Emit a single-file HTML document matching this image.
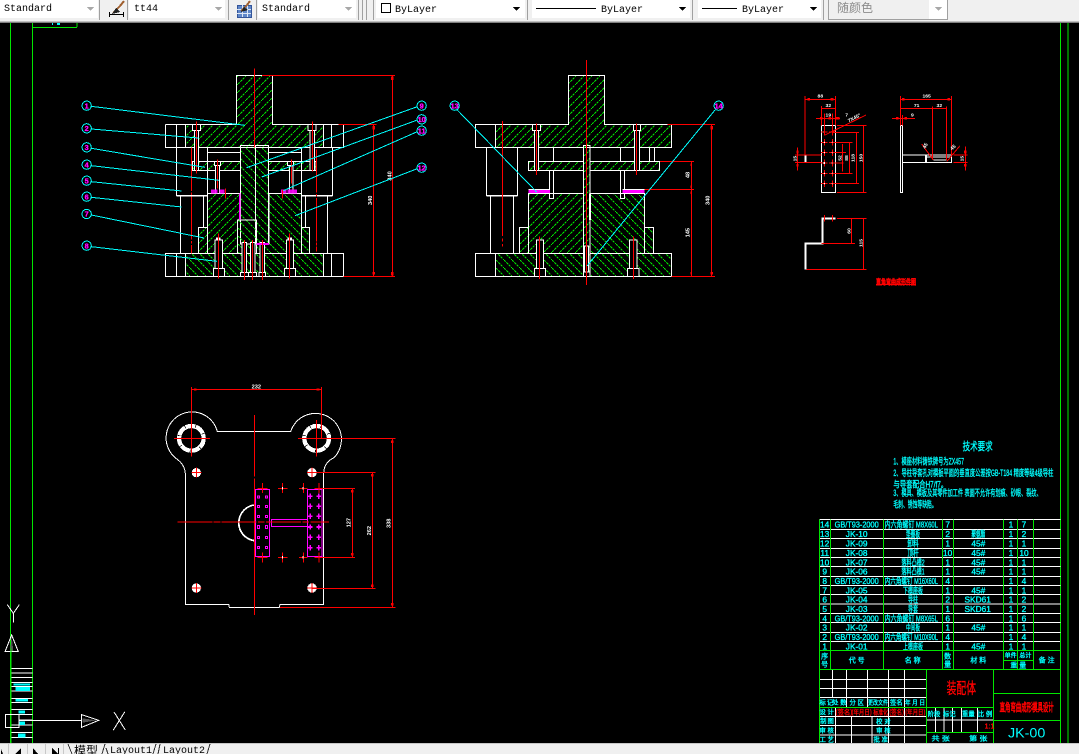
<!DOCTYPE html>
<html><head><meta charset="utf-8"><style>
html,body{margin:0;padding:0;background:#000;width:1079px;height:754px;overflow:hidden}
svg{display:block;position:absolute;left:0;top:0}
svg path,svg rect,svg circle{shape-rendering:crispEdges}
.w{stroke:#fff;stroke-width:3;fill:none}
.g{stroke:#00e600;stroke-width:3;fill:none}
.r{stroke:#f00;stroke-width:3;fill:none}
.c{stroke:#00ffff;stroke-width:3;fill:none}
.m{stroke:#f0f;stroke-width:3;fill:none}
text{font-family:"Liberation Sans","Noto Sans CJK SC",sans-serif}
.t{fill:#0ff;stroke:#0ff;stroke-width:1;font-size:25px;text-anchor:middle}
.dim{fill:#fff;font-size:17px;text-anchor:middle;font-weight:bold}
.pv .dim{font-size:15px}
.bn{fill:#f0f;stroke:#f0f;stroke-width:1;font-size:22px;text-anchor:middle;font-weight:bold}
.tb{font-family:"Liberation Mono","Noto Sans CJK SC",monospace;font-size:10px;fill:#000}
</style></head><body>
<svg width="1079" height="754" viewBox="0 0 1079 754" xmlns="http://www.w3.org/2000/svg">
<defs>
<pattern id="h1" patternUnits="userSpaceOnUse" width="24" height="24"><path d="M0,24L24,0M-6,6L6,-6M18,30L30,18" stroke="#00e600" stroke-width="3" stroke-dasharray="7 3" fill="none"/></pattern>
<pattern id="h2" patternUnits="userSpaceOnUse" width="24" height="24"><path d="M0,0L24,24M-6,18L6,30M18,-6L30,6" stroke="#00e600" stroke-width="3" stroke-dasharray="7 3" fill="none"/></pattern>
</defs>
<rect width="1079" height="754" fill="#000"/>

<!-- frame -->
<g>
<path d="M10.5,22V743M32.5,22V743M1060.5,22V743M1068,22V743M32,27.5H77M77,22V27" stroke="#00e600" stroke-width="1" fill="none"/>
<path d="M52,23h1v2h-1zM57,23h3v2h-3z" fill="#0ff"/>
</g>

<!-- left column + UCS -->
<g transform="translate(0,590) scale(.33333)">
<path class="w" d="M35,235H98M35,249H98M35,263H98M35,277H98M35,290H98M35,303H98M35,325H98M35,337H98M35,358H98M35,373H98M57,390H98M35,405H98M35,427H98M35,443H98"/>
<path fill="#0ff" d="M40,280h50v6h-50zM46,291h44v12h-44zM46,327h38v8h-38zM55,361h20v10h-20zM57,395h18v10h-18zM54,430h22v12h-22z"/>
</g>
<g transform="translate(0,590) scale(.33333)">
<path class="w" d="M22,44L40,70L58,44M40,70V98"/>
<path class="w" d="M35,135L15,185H55Z"/><path d="M35,140L30,183H40Z" fill="#555"/>
<path d="M33,175V460" stroke="#00e600" stroke-width="3"/>
<rect class="w" x="16" y="373" width="41" height="40"/>
<path class="w" d="M57,391H245M245,374L296,391L245,412Z"/><path d="M248,385L290,391L248,398Z" fill="#555"/>
<path class="w" d="M342,366L376,420M374,366L340,420"/>
</g>

<!-- LEFT SECTION VIEW -->
<g transform="translate(70,60) scale(.33333)">
<g stroke="#fff" stroke-width="3">
<path fill="url(#h1)" d="M500,46H607V193H760V263H347V193H500Z"/>
<path fill="url(#h1)" d="M367,304H511V332H367ZM596,304H738V332H596Z"/>
<path fill="url(#h2)" d="M511,256H557V552H511Z"/>
<path fill="url(#h2)" d="M557,256H596V552H557Z"/>
<path fill="url(#h1)" d="M412,400H511V480H502V580H412Z"/>
<path fill="url(#h2)" d="M597,400H695V580H559V552H597Z"/>
<path fill="url(#h2)" d="M502,480H559V580H502Z"/>
<path fill="url(#h1)" d="M385,502H412V580H385Z"/>
<path fill="url(#h2)" d="M695,502H718V580H695Z"/>
<path fill="url(#h2)" d="M347,580H760V650H347Z"/>
</g>
<path class="w" d="M286,193H347M760,193H820V263H286V193M319,193V263M785,193V263M286,580H820V650H286ZM319,580V650M785,580V650"/>
<path class="w" d="M319,263V407H412V263M412,278H511M695,263V407H788V263M596,278H695M412,332V400M695,332V400"/>
<path d="M320,407H412M695,407H788" stroke="#fff" stroke-width="5"/>
<path class="w" d="M331,407V580M412,407V502M400,407V502M773,407V580M695,407V502M706,407V502"/>
<path d="M502,480H559V552M558,480V552" stroke="#fff" stroke-width="4" fill="none"/>
<path d="M597,400V552" stroke="#fff" stroke-width="4"/>
<!-- bolts -->
<g fill="#000" stroke="#fff" stroke-width="3">
<rect x="367" y="194" width="25" height="18"/><rect x="373" y="212" width="13" height="120"/>
<rect x="714" y="194" width="24" height="18"/><rect x="720" y="212" width="13" height="120"/>
<rect x="434" y="304" width="18" height="12"/><rect x="436" y="316" width="12" height="84"/>
<rect x="653" y="304" width="18" height="12"/><rect x="658" y="316" width="11" height="84"/>
<rect x="435" y="540" width="22" height="88"/><rect x="649" y="540" width="22" height="88"/>
<rect x="430" y="625" width="34" height="25"/><rect x="643" y="625" width="34" height="25"/>
<rect x="516" y="548" width="14" height="90"/><rect x="541" y="548" width="14" height="90"/><rect x="570" y="548" width="14" height="90"/>
<rect x="511" y="638" width="24" height="12"/><rect x="536" y="638" width="24" height="12"/><rect x="567" y="638" width="20" height="12"/>
</g>
<path d="M438,532h14v8h-14zM652,532h14v8h-14z" fill="#fff"/>
<path d="M423,388h20v12h-20zM448,388h16v12h-16zM633,388h16v12h-16zM653,388h28v12h-28z" fill="#f0f" opacity=".9"/>
<path d="M509,400V480M560,552H597" stroke="#f0f" stroke-width="5"/>
<!-- red -->
<path class="r" stroke-width="3" d="M553,25V262M380,185V340M727,185V335M443,298V385M664,298V370M466,385V415M638,390V415M445,520V655M659,520V655M523,540V660M547,540V660M577,540V660"/>
<path d="M365,263V580M740,268V575" stroke="#f00" stroke-width="3" stroke-dasharray="130 4 8 4"/>
<path d="M576,46H975M805,193H920M820,650H975" stroke="#f00" stroke-width="3"/>
<path d="M967,46V650M911,193V650" stroke="#f00" stroke-width="3"/>
<path d="M963,50h8v10h-8zM963,636h8v10h-8zM907,198h8v10h-8zM907,636h8v8h-8z" fill="#f00"/>
<text class="dim" transform="translate(965,348) rotate(-90)">340</text>
<text class="dim" transform="translate(906,421) rotate(-90)">340</text>
<!-- leaders -->
<path class="c" d="M64,139L525,196M64,207L385,234M64,265L405,322M64,317L447,361M64,365L335,393M64,412L335,441M64,465L402,534M64,560L441,604M1042,140L530,323M1042,180L575,351M1042,215L640,392M1042,326L675,467"/>
<g class="c" fill="#000" style="fill:#000"><circle cx="50" cy="137" r="14"/><circle cx="50" cy="205" r="14"/><circle cx="50" cy="262" r="14"/><circle cx="50" cy="314" r="14"/><circle cx="50" cy="362" r="14"/><circle cx="50" cy="410" r="14"/><circle cx="50" cy="462" r="14"/><circle cx="50" cy="557" r="14"/><circle cx="1055" cy="137" r="14"/><circle cx="1055" cy="178" r="14"/><circle cx="1055" cy="212" r="14"/><circle cx="1055" cy="323" r="14"/></g>
<text class="bn" x="50" y="145">1</text><text class="bn" x="50" y="213">2</text><text class="bn" x="50" y="270">3</text><text class="bn" x="50" y="322">4</text><text class="bn" x="50" y="370">5</text><text class="bn" x="50" y="418">6</text><text class="bn" x="50" y="470">7</text><text class="bn" x="50" y="565">8</text><text class="bn" x="1055" y="145">9</text><text class="bn" x="1055" y="186">10</text><text class="bn" x="1055" y="220">11</text><text class="bn" x="1055" y="331">12</text>
</g>

<!-- RIGHT SECTION VIEW -->
<g transform="translate(440,60) scale(.33333)">
<g stroke="#fff" stroke-width="3">
<path fill="url(#h1)" d="M386,46H493V193H695V263H167V193H386Z"/>
<path fill="url(#h1)" d="M265,304H430V332H265ZM450,304H659V332H450Z"/>
<path fill="url(#h1)" d="M430,256H450V640H430Z"/>
<path fill="url(#h1)" d="M265,400H430V580H265Z"/>
<path fill="url(#h2)" d="M450,400H614V580H450Z"/>
<path fill="url(#h1)" d="M238,502H265V580H238Z"/>
<path fill="url(#h2)" d="M614,502H641V580H614Z"/>
<path fill="url(#h2)" d="M167,580H430V650H167ZM450,580H695V650H450Z"/>
</g>
<path class="w" d="M167,193H106V263H167M106,580H167V650H106Z"/>
<path class="w" d="M139,263V407H233V263M151,409V580M221,409V580M340,263V304M541,263V304M628,263V304M644,263V304"/>
<path d="M140,407H232" stroke="#fff" stroke-width="5"/>
<g fill="#000" stroke="#fff" stroke-width="3">
<rect x="278" y="194" width="24" height="18"/><rect x="283" y="212" width="13" height="120"/>
<rect x="580" y="194" width="22" height="18"/><rect x="583" y="212" width="16" height="120"/>
<rect x="328" y="332" width="13" height="84"/><rect x="541" y="332" width="13" height="84"/>
<rect x="289" y="540" width="22" height="88"/><rect x="569" y="540" width="22" height="88"/>
<rect x="283" y="625" width="34" height="25"/><rect x="563" y="625" width="34" height="25"/>
<rect x="434" y="558" width="12" height="80"/><rect x="430" y="636" width="20" height="14"/>
</g>
<path d="M266,388H330V400H266ZM548,388H613V400H548Z" fill="#f0f"/>
<path d="M266,388H330M548,388H613M266,400H430M450,400H614" stroke="#fff" stroke-width="3"/>
<path d="M450,400V480" stroke="#fff" stroke-width="5"/>
<path class="r" d="M439,0V675M289,190V345M590,190V345M298,530V657M580,530V657"/>
<path d="M187,183V560" stroke="#f00" stroke-width="3" stroke-dasharray="345 8 8 8"/>
<path d="M682,193H825M695,650H825M660,304H762M614,388H762" stroke="#f00" stroke-width="3"/>
<path d="M815,193V650M754,304V650" stroke="#f00" stroke-width="3"/>
<path d="M811,198h8v10h-8zM811,636h8v8h-8zM751,310h5v8h-5zM751,376h5v8h-5zM751,394h5v8h-5zM751,636h5v8h-5z" fill="#f00"/>
<text class="dim" transform="translate(809,421) rotate(-90)">340</text>
<text class="dim" transform="translate(748,345) rotate(-90)">48</text>
<text class="dim" transform="translate(748,518) rotate(-90)">145</text>
<path d="M50,148L290,396M825,150L441,618" stroke="#00ffff" stroke-width="3"/>
<g class="c" style="fill:#000"><circle cx="44" cy="137" r="14"/><circle cx="836" cy="137" r="14"/></g>
<text class="bn" x="44" y="145">13</text><text class="bn" x="836" y="145">14</text>
</g>

<!-- PART VIEWS -->
<g class="pv" transform="translate(780,80) scale(.33333)">
<rect class="w" x="124" y="136" width="43" height="202"/>
<path class="w" d="M93,225H124M93,247H124M368,225H515V247H368M440,231H515M460,240H500"/>
<rect class="w" x="361" y="136" width="7" height="202"/>
<path d="M77,225V247M438,225V247" stroke="#fff" stroke-width="6"/>
<path d="M133,146V166M123,156H143M157,146V166M147,156H167M133,177V197M123,187H143M157,177V197M147,187H167M133,208V228M123,218H143M157,208V228M147,218H167M133,239V259M123,249H143M157,239V259M147,249H167M133,270V290M123,280H143M157,270V290M147,280H167M133,301V321M123,311H143M157,301V321M147,311H167" stroke="#f00" stroke-width="3"/>
<g fill="#fff"><circle cx="133" cy="156" r="2"/><circle cx="157" cy="156" r="2"/><circle cx="133" cy="187" r="2"/><circle cx="157" cy="187" r="2"/><circle cx="133" cy="218" r="2"/><circle cx="157" cy="218" r="2"/><circle cx="133" cy="249" r="3"/><circle cx="157" cy="249" r="2"/><circle cx="133" cy="280" r="2"/><circle cx="157" cy="280" r="2"/><circle cx="133" cy="311" r="2"/><circle cx="157" cy="311" r="2"/></g>
<path class="r" d="M75,48V225M167,48V136M75,58H167M124,78V136M167,78V136M124,86H167M108,115H180M133,100V165M157,100V165M135,165L258,105M157,157H237M157,187H218M157,218H198M157,249H190M157,280H218M157,311H237M188,192V275M208,187V280M229,157V311M250,136V338M171,136H260M171,338H260M53,202V272M45,225H124M45,247H124"/>
<path class="r" d="M361,48V136M515,48V225M361,58H515M361,86H500M458,80V235M500,80V240M336,115H405M361,105V136M368,105V136M425,192L460,240M540,197L500,245M557,200V272M520,225H563M520,247H563"/>
<path d="M82,54h8v8h-8zM152,54h8v8h-8zM120,111h8v8h-8zM145,111h8v8h-8zM168,111h10v8h-10zM366,54h8v8h-8zM502,54h8v8h-8zM348,111h8v8h-8zM373,111h8v8h-8zM552,212h8v8h-8zM552,252h8v8h-8zM50,212h6v8h-6zM50,252h6v8h-6z" fill="#f00"/>
<text class="dim" x="121" y="53">88</text><text class="dim" x="145" y="81">32</text><text class="dim" x="145" y="110">19</text><text class="dim" x="200" y="110">7</text>
<text class="dim" transform="translate(225,118) rotate(-28)">7X45°</text>
<text class="dim" x="440" y="53">165</text><text class="dim" x="410" y="81">71</text><text class="dim" x="478" y="81">32</text><text class="dim" x="397" y="110">9</text>
<text class="dim" transform="translate(49,236) rotate(-90)">15</text><text class="dim" transform="translate(551,236) rotate(-90)">15</text>
<text class="dim" transform="translate(184,234) rotate(-90)">52</text><text class="dim" transform="translate(204,234) rotate(-90)">88</text><text class="dim" transform="translate(223,234) rotate(-90)">118</text><text class="dim" transform="translate(247,234) rotate(-90)">150</text>
<text class="dim" transform="translate(440,200) rotate(-60)">45</text><text class="dim" transform="translate(522,206) rotate(-40)">45</text>
<path d="M127,415V490H77V568M125,415H167" stroke="#fff" stroke-width="6" fill="none"/>
<path class="r" d="M171,415H260M125,490H225M80,568H260M214,415V490M250,415V568M133,405V425M157,405V425"/>
<text class="dim" transform="translate(211,453) rotate(-90)">60</text><text class="dim" transform="translate(247,489) rotate(-90)">115</text>
<text x="348" y="613" font-size="22" font-weight="bold" fill="#f00" stroke="#f00" stroke-width="1.5" text-anchor="middle" textLength="120" lengthAdjust="spacingAndGlyphs">直角弯曲成形件图</text>
<path d="M288,613H408" stroke="#f00" stroke-width="3"/>
</g>

<!-- PLAN VIEW -->
<g transform="translate(150,375) scale(.33333)">
<path class="w" d="M106,295Q104,268 78,250A78,78 0 1 1 202,170L422,170A78,78 0 1 1 552,248Q522,262 521,295V688H390L388,697H238L236,688H106Z"/>
<circle cx="124" cy="190" r="38" fill="none" stroke="#fff" stroke-width="11" stroke-dasharray="30 2"/>
<circle cx="500" cy="190" r="38" fill="none" stroke="#fff" stroke-width="11" stroke-dasharray="30 2"/>
<circle cx="124" cy="190" r="32" fill="none" stroke="#fff" stroke-width="3"/><circle cx="500" cy="190" r="32" fill="none" stroke="#fff" stroke-width="3"/>
<g fill="#fff"><circle cx="139" cy="293" r="14"/><circle cx="486" cy="293" r="14"/><circle cx="139" cy="639" r="14"/><circle cx="486" cy="639" r="14"/></g>
<path d="M139,278V308M124,293H154M486,278V308M471,293H501M139,624V654M124,639H154M486,624V654M471,639H501" stroke="#f00" stroke-width="3"/>
<path d="M313,390A54,54 0 0 0 313,497" fill="none" stroke="#fff" stroke-width="5"/>
<path d="M316,344H359V544H316ZM473,344H516V544H473ZM365,433H473V455H365Z" class="m"/>
<g fill="none" stroke="#f0f" stroke-width="3"><rect x="322" y="363" width="6" height="6"/><rect x="347" y="363" width="6" height="6"/><rect x="322" y="391" width="6" height="6"/><rect x="347" y="391" width="6" height="6"/><rect x="322" y="421" width="6" height="6"/><rect x="347" y="421" width="6" height="6"/><rect x="322" y="452" width="6" height="8"/><rect x="347" y="452" width="6" height="8"/><rect x="322" y="484" width="6" height="6"/><rect x="347" y="484" width="6" height="6"/><rect x="322" y="514" width="6" height="6"/><rect x="347" y="514" width="6" height="6"/></g>
<path d="M481,356V372M474,364H488M506,356V372M499,364H513M481,386V402M474,394H488M506,386V402M499,394H513M481,416V432M474,424H488M506,416V432M499,424H513M481,448V464M474,456H488M506,448V464M499,456H513M481,479V495M474,487H488M506,479V495M499,487H513M481,510V526M474,518H488M506,510V526M499,518H513" stroke="#f0f" stroke-width="5"/>
<path d="M337,324V354M322,340H352M398,324V354M384,340H412M460,324V354M447,340H473M507,324V354M494,340H520M337,533V563M322,547H352M398,533V563M384,547H412M460,533V563M447,547H473M507,533V563M494,547H520" stroke="#f00" stroke-width="3"/>
<rect x="396" y="336" width="3" height="8" fill="#fff"/><rect x="396" y="543" width="3" height="8" fill="#fff"/><rect x="458" y="336" width="3" height="8" fill="#fff"/><rect x="458" y="543" width="3" height="8" fill="#fff"/>
<path class="r" d="M124,36V245M515,36V190M124,43H515M72,190H180M444,190H737M500,135V245M500,292H677M507,340H615M507,547H615M487,640H677M390,697H737M727,190V697M667,292V640M607,340V547"/>
<path d="M313,120V305M313,310V720" stroke="#f00" stroke-width="3"/>
<path d="M82,441H537" stroke="#f00" stroke-width="3" stroke-dasharray="105 4 20 4"/>
<path d="M132,40h8v6h-8zM500,40h8v6h-8zM723,196h8v8h-8zM723,684h8v8h-8zM663,297h8v8h-8zM663,628h8v8h-8zM603,345h8v8h-8zM603,534h8v8h-8z" fill="#f00"/>
<text class="dim" x="319" y="40">232</text>
<text class="dim" transform="translate(722,445) rotate(-90)">338</text><text class="dim" transform="translate(663,467) rotate(-90)">262</text><text class="dim" transform="translate(602,443) rotate(-90)">127</text>
</g>

<!-- TECH + TABLE -->
<g transform="translate(810,430) scale(.33333)">
<text x="503" y="60" font-size="32" fill="#0ff" stroke="#0ff" stroke-width="1" text-anchor="middle" textLength="90" lengthAdjust="spacingAndGlyphs">技术要求</text>
<g fill="#0ff" stroke="#0ff" stroke-width="1" font-size="27">
<text x="250" y="103" textLength="212" lengthAdjust="spacingAndGlyphs">1、模座材料铸铁牌号为ZX457</text>
<text x="250" y="138" textLength="480" lengthAdjust="spacingAndGlyphs">2、导柱导套孔对模板平面的垂直度公差按GB-T184 精度等级4级导柱</text>
<text x="250" y="173" textLength="162" lengthAdjust="spacingAndGlyphs">与导套配合H7/f7。</text>
<text x="250" y="198" textLength="445" lengthAdjust="spacingAndGlyphs">3、模具、模板及其零件加工件 表面不允许有划痕、砂眼、裂纹、</text>
<text x="250" y="233" textLength="130" lengthAdjust="spacingAndGlyphs">毛刺、锈蚀等缺陷。</text>
</g>
<g>
<path class="w" d="M28,268H751M28,298H751M28,325H751M28,355H751M28,383H751M28,410H751M28,439H751M28,467H751M28,494H751M28,522H751M28,550H751M28,578H751M28,607H751M28,634H751"/>
<path class="g" d="M28,268V675M61,268V675M220,268V675M397,268V675M430,268V675M580,268V675M622,268V675M670,268V675M28,661H751"/>
</g>
<g class="t">
<text x="44" y="293">14</text><text x="140" y="293" textLength="132" lengthAdjust="spacingAndGlyphs">GB/T93-2000</text><text x="304" y="293" textLength="160" lengthAdjust="spacingAndGlyphs">内六角螺钉 M8X60L</text><text x="413" y="293">7</text><text x="603" y="293">1</text><text x="642" y="293">7</text>
<text x="44" y="321">13</text><text x="140" y="321">JK-10</text><text x="309" y="321" textLength="42" lengthAdjust="spacingAndGlyphs">垫圈板</text><text x="413" y="321">2</text><text x="505" y="321" textLength="42" lengthAdjust="spacingAndGlyphs">聚氨酯</text><text x="603" y="321">1</text><text x="642" y="321">2</text>
<text x="44" y="349">12</text><text x="140" y="349">JK-09</text><text x="309" y="349" textLength="34" lengthAdjust="spacingAndGlyphs">卸料</text><text x="413" y="349">1</text><text x="505" y="349">45#</text><text x="603" y="349">1</text><text x="642" y="349">1</text>
<text x="44" y="378">11</text><text x="140" y="378">JK-08</text><text x="309" y="378" textLength="34" lengthAdjust="spacingAndGlyphs">顶杆</text><text x="413" y="378">10</text><text x="505" y="378">45#</text><text x="603" y="378">1</text><text x="642" y="378">10</text>
<text x="44" y="406">10</text><text x="140" y="406">JK-07</text><text x="309" y="406" textLength="70" lengthAdjust="spacingAndGlyphs">落料凸模2</text><text x="413" y="406">1</text><text x="505" y="406">45#</text><text x="603" y="406">1</text><text x="642" y="406">1</text>
<text x="44" y="434">9</text><text x="140" y="434">JK-06</text><text x="309" y="434" textLength="70" lengthAdjust="spacingAndGlyphs">落料凸模1</text><text x="413" y="434">1</text><text x="505" y="434">45#</text><text x="603" y="434">1</text><text x="642" y="434">1</text>
<text x="44" y="462">8</text><text x="140" y="462" textLength="132" lengthAdjust="spacingAndGlyphs">GB/T93-2000</text><text x="304" y="462" textLength="160" lengthAdjust="spacingAndGlyphs">内六角螺钉 M16X60L</text><text x="413" y="462">4</text><text x="603" y="462">1</text><text x="642" y="462">4</text>
<text x="44" y="490">7</text><text x="140" y="490">JK-05</text><text x="309" y="490" textLength="60" lengthAdjust="spacingAndGlyphs">下模座板</text><text x="413" y="490">1</text><text x="505" y="490">45#</text><text x="603" y="490">1</text><text x="642" y="490">1</text>
<text x="44" y="518">6</text><text x="140" y="518">JK-04</text><text x="309" y="518" textLength="30" lengthAdjust="spacingAndGlyphs">导柱</text><text x="413" y="518">2</text><text x="503" y="518">SKD61</text><text x="603" y="518">1</text><text x="642" y="518">2</text>
<text x="44" y="546">5</text><text x="140" y="546">JK-03</text><text x="309" y="546" textLength="30" lengthAdjust="spacingAndGlyphs">导套</text><text x="413" y="546">1</text><text x="503" y="546">SKD61</text><text x="603" y="546">1</text><text x="642" y="546">2</text>
<text x="44" y="574">4</text><text x="140" y="574" textLength="132" lengthAdjust="spacingAndGlyphs">GB/T93-2000</text><text x="304" y="574" textLength="160" lengthAdjust="spacingAndGlyphs">内六角螺钉 M8X65L</text><text x="413" y="574">6</text><text x="603" y="574">1</text><text x="642" y="574">6</text>
<text x="44" y="602">3</text><text x="140" y="602">JK-02</text><text x="309" y="602" textLength="42" lengthAdjust="spacingAndGlyphs">中间板</text><text x="413" y="602">1</text><text x="505" y="602">45#</text><text x="603" y="602">1</text><text x="642" y="602">1</text>
<text x="44" y="630">2</text><text x="140" y="630" textLength="132" lengthAdjust="spacingAndGlyphs">GB/T93-2000</text><text x="304" y="630" textLength="160" lengthAdjust="spacingAndGlyphs">内六角螺钉 M10X90L</text><text x="413" y="630">4</text><text x="603" y="630">1</text><text x="642" y="630">4</text>
<text x="44" y="658">1</text><text x="140" y="658">JK-01</text><text x="309" y="658" textLength="60" lengthAdjust="spacingAndGlyphs">上模座板</text><text x="413" y="658">1</text><text x="505" y="658">45#</text><text x="603" y="658">1</text><text x="642" y="658">1</text>
</g>
</g>

<!-- TITLE BLOCK -->
<g transform="translate(810,640) scale(.33333)">
<g>
<path class="w" d="M28,5H751M28,118H349M28,145H349M28,172H349M68,88V172M110,88V202M172,88V202M235,88V312M283,88V312M28,229H349M28,256H349M28,285H349M76,202V312M125,229V312M186,229V312M349,240H550M376,202V277M402,202V277M428,202V277M455,202V277M502,202V277"/>
<path class="g" d="M28,0V312M61,0V88M220,0V88M397,0V88M430,0V88M580,0V88M622,0V88M670,0V88M751,0V312M28,32H751M28,88H751M580,62H670M349,88V312M550,88V312M28,202H550M349,277H550M550,160H751M550,241H751"/>
</g>
<g class="t" style="font-size:21px">
<text x="44" y="55">序</text><text x="44" y="80">号</text><text x="140" y="68">代 号</text><text x="308" y="68">名 称</text><text x="413" y="55">数</text><text x="413" y="80">量</text><text x="505" y="68">材 料</text><text x="602" y="53" style="font-size:18px">单件</text><text x="646" y="53" style="font-size:18px">总计</text><text x="625" y="83">重 量</text><text x="710" y="68">备 注</text>
</g>
<g class="t" style="font-size:19px">
<text x="38" y="194">标</text><text x="60" y="194">记</text><text x="88" y="194">处 数</text><text x="140" y="194">分 区</text><text x="204" y="194" textLength="60" lengthAdjust="spacingAndGlyphs">更改文件</text><text x="259" y="194">签名</text><text x="315" y="194" textLength="60" lengthAdjust="spacingAndGlyphs">年 月 日</text>
<text x="50" y="222">设 计</text><text x="40" y="249">制</text><text x="62" y="249">图</text><text x="50" y="277">审 核</text><text x="50" y="304">工 艺</text>
<text x="220" y="251">校 对</text><text x="220" y="278">审 核</text><text x="212" y="305">批 准</text>
<text x="372" y="228">阶段</text><text x="418" y="228">标记</text><text x="475" y="228">重量</text><text x="525" y="228">比 例</text>
<text x="392" y="302" textLength="55" lengthAdjust="spacingAndGlyphs">共 张</text><text x="505" y="302" textLength="55" lengthAdjust="spacingAndGlyphs">第 张</text>
</g>
<g fill="#f00" stroke="#f00" stroke-width="1" font-size="21">
<text x="102" y="223" text-anchor="middle" textLength="50" lengthAdjust="spacingAndGlyphs">(签名)</text><text x="155" y="223" text-anchor="middle" textLength="60" lengthAdjust="spacingAndGlyphs">(年月日)</text><text x="212" y="223" text-anchor="middle" textLength="44" lengthAdjust="spacingAndGlyphs">标准化</text><text x="260" y="223" text-anchor="middle" textLength="44" lengthAdjust="spacingAndGlyphs">(签名)</text><text x="316" y="223" text-anchor="middle" textLength="60" lengthAdjust="spacingAndGlyphs">(年月日)</text>
<text x="524" y="265">1:1</text>
<text x="454" y="160" font-size="46" text-anchor="middle" textLength="88" lengthAdjust="spacingAndGlyphs">装配体</text>
<text x="650" y="213" font-size="32" stroke-width="2" text-anchor="middle" textLength="162" lengthAdjust="spacingAndGlyphs">直角弯曲成形模具设计</text>
</g>
<text x="650" y="292" font-size="42" fill="#0ff" text-anchor="middle" textLength="112" lengthAdjust="spacingAndGlyphs">JK-00</text>
</g>

<!-- TOOLBAR -->
<g>
<rect x="0" y="0" width="1079" height="22" fill="#f0f0f0"/>
<rect x="0" y="21" width="1079" height="1" fill="#c0c0c0"/><rect x="0" y="22" width="1079" height="1" fill="#808080"/>
<rect x="0" y="0" width="98" height="18" fill="#fff"/>
<rect x="129" y="0" width="96" height="18" fill="#fff"/>
<rect x="258" y="0" width="98" height="18" fill="#fff"/>
<rect x="376" y="0" width="149" height="18" fill="#fff"/>
<rect x="532" y="0" width="158" height="18" fill="#fff"/>
<rect x="698" y="0" width="123" height="18" fill="#fff"/>
<path d="M99.5,0V20M127.5,0V20M228.5,0V20M256.5,0V20M358.5,0V20M362.5,0V20M366.5,0V20M373.5,0V20M527.5,0V20M692.5,0V20M823.5,0V20M828.5,0V20M947.5,0V20M829,19.5H948" stroke="#a0a0a0" stroke-width="1"/>
<rect x="381.5" y="3.5" width="9" height="9" fill="#fff" stroke="#000"/>
<path d="M536,8.5H596M702,8.5H737" stroke="#000" stroke-width="1"/>
<path d="M87,7h7l-3.5,4zM215,7h7l-3.5,4zM345,7h7l-3.5,4z" fill="#a8a8a8"/>
<path d="M513,7h7l-3.5,4zM679,7h7l-3.5,4zM810,7h7l-3.5,4z" fill="#000"/>
<rect x="929" y="0" width="18" height="19" fill="#fff"/>
<path d="M935,7h7l-3.5,4z" fill="#a8a8a8"/>
<rect x="829" y="0" width="100" height="19" fill="#f0f0f0"/>
</g>
<text class="tb" x="4" y="11">Standard</text>
<text class="tb" x="134" y="11">tt44</text>
<text class="tb" x="262" y="11">Standard</text>
<text class="tb" x="395" y="12">ByLayer</text>
<text class="tb" x="601" y="12">ByLayer</text>
<text class="tb" x="742" y="12">ByLayer</text>
<text x="837" y="12" font-size="12" fill="#8c8c8c" style="font-family:'Noto Sans CJK SC',sans-serif">随颜色</text>
<!-- icons -->
<path d="M109,14.5H124M109.5,12V17M123.5,12V17" stroke="#000" fill="none"/>
<path d="M113,13L120,6L124,1" stroke="#a06030" stroke-width="2" fill="none"/><path d="M112,14L116,8L120,12Z" fill="#222"/>
<rect x="237.5" y="5.5" width="14" height="12" fill="#5f86c8" stroke="#33559a"/>
<path d="M237,9.5H251M237,13.5H251M242.5,5V17M247.5,5V17" stroke="#dce6f5"/>
<path d="M241,11L247,5L250,1" stroke="#a06030" stroke-width="2" fill="none"/><path d="M241,12L244,7L248,10Z" fill="#222"/>

<!-- BOTTOM BAR -->
<rect x="0" y="743" width="1079" height="11" fill="#f0f0f0"/>
<path d="M8.5,744V754M27.5,744V754M45.5,744V754M63.5,744V754M0,743.5H1079" stroke="#c8c8c8" fill="none"/>
<path d="M21,748L15,754H21ZM33,748V754H38ZM52,748V754H58ZM1,749V754H3Z" fill="#000"/>
<path d="M58.5,748V754" stroke="#000"/>
<path d="M68,744L72,754M105,744L102,754M108,754L106,748M156,744L153,754M158,754L160,744M210,744L207,754" stroke="#333" fill="none"/>
<text x="74" y="755" font-size="12" fill="#000" style="font-family:'Noto Sans CJK SC',sans-serif">模型</text>
<text class="tb" x="110" y="753">Layout1</text>
<text class="tb" x="163" y="753">Layout2</text>
</svg>
</body></html>
